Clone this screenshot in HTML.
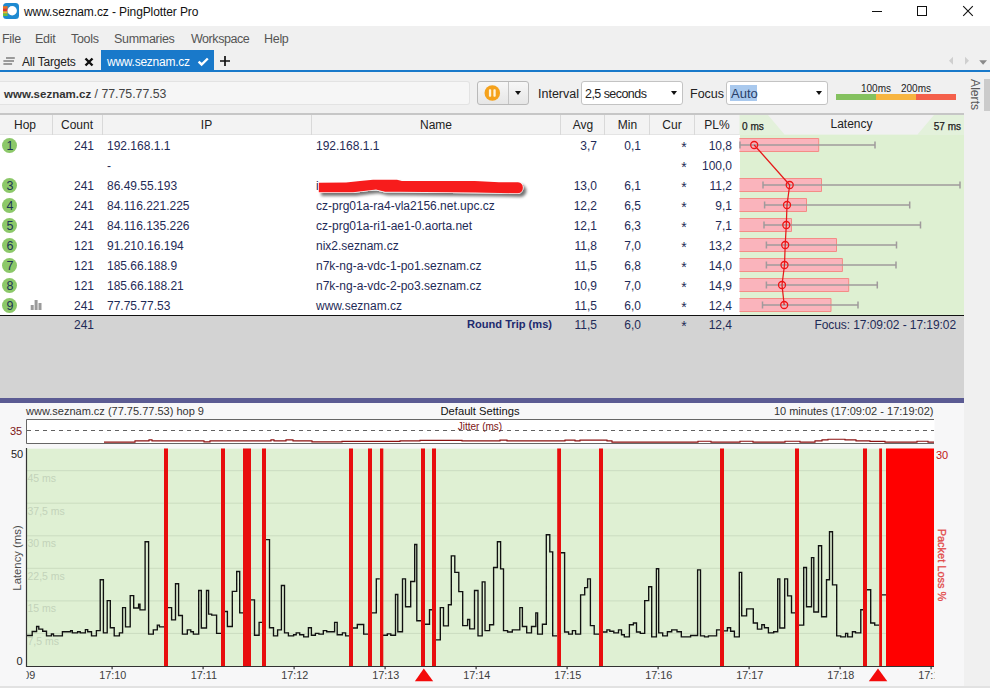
<!DOCTYPE html>
<html lang="en">
<head>
<meta charset="utf-8">
<title>www.seznam.cz - PingPlotter Pro</title>
<style>
html,body{margin:0;padding:0;}
body{width:990px;height:688px;overflow:hidden;position:relative;background:#f0f0f0;font-family:"Liberation Sans",sans-serif;font-size:12px;color:#222;}
.abs{position:absolute;}
.t{position:absolute;white-space:nowrap;line-height:1;}
#titlebar{left:0;top:0;width:990px;height:26px;background:#fff;}
#menubar{left:0;top:26px;width:990px;height:24px;background:#f0f0f0;}
#menubar .t{top:7px;font-size:12.5px;letter-spacing:-0.3px;color:#555;}
#tabs{left:0;top:50px;width:990px;height:20px;background:#f0f0f0;}
#tabline{left:0;top:70px;width:990px;height:2px;background:#1979ca;}
#seltab{left:101px;top:50px;width:113px;height:21px;background:#1979ca;}
#toolbar{left:0;top:72px;width:964px;height:42px;background:#f0f0f0;}
.combo{background:#fff;border:1px solid #c3c3c3;border-radius:3px;box-sizing:border-box;height:24px;top:81px;}
.caret{width:0;height:0;border-left:3.6px solid transparent;border-right:3.6px solid transparent;border-top:4.4px solid #111;}
#alerts{left:964px;top:72px;width:26px;height:616px;background:#f0f0f0;}
/* table */
#thead{left:0;top:113px;width:964px;height:22px;background:#f3f3f3;border-top:2px solid #c6c6c6;border-bottom:1px solid #e4e4e4;box-sizing:border-box;}
#thead .t{top:3.7px;font-size:12px;color:#222;}
.vsep{position:absolute;top:115px;width:1px;height:20px;background:#d9d9d9;}
#tbody{left:0;top:135px;width:740px;height:180px;background:#fff;}
.row{position:absolute;left:0;width:738px;height:20px;color:#1f2b57;font-size:12px;}
.row .t{top:5px;}
.r{text-align:right;}
.hop{position:absolute;left:2.4px;top:3px;width:15px;height:14.5px;border-radius:8px;background:#8cc869;color:#1d3557;font-size:12.5px;line-height:16px;text-align:center;}
#latbg{left:739.5px;top:115px;width:224.5px;height:200px;background:#def0d2;}
#sumrow{left:0;top:315px;width:964px;height:85px;background:#d3d3d3;}
#sumline{left:0;top:315px;width:964px;height:1.3px;background:#111;}
#splitter{left:0;top:398px;width:964px;height:5px;background:#5b5b93;}
#graph{left:0;top:403px;width:964px;height:285px;background:#f7f7f8;}
</style>
</head>
<body>
<!-- TITLE BAR -->
<div id="titlebar" class="abs">
  <svg class="abs" style="left:3px;top:3px" width="16" height="16" viewBox="0 0 16 16">
    <rect x="0" y="0" width="16" height="16" rx="3.5" fill="#1e8ad1"/>
    <rect x="0" y="3.2" width="4.6" height="2.6" fill="#f2701d"/>
    <rect x="0" y="5.8" width="4.6" height="2.6" fill="#e5352c"/>
    <rect x="0" y="8.4" width="4.6" height="2.2" fill="#f3b721"/>
    <rect x="0" y="10.6" width="4.6" height="2.4" fill="#6cbf3f"/>
    <circle cx="9.2" cy="7.8" r="4.7" fill="#fff"/>
  </svg>
  <div class="t" style="left:24px;top:6px;font-size:12px;letter-spacing:-0.1px;color:#111;">www.seznam.cz - PingPlotter Pro</div>
  <svg class="abs" style="left:860px;top:0" width="130" height="27" viewBox="0 0 130 27">
    <path d="M12 11.5H22" stroke="#111" stroke-width="1" fill="none"/>
    <rect x="57.5" y="6.5" width="9" height="9" stroke="#111" stroke-width="1" fill="none"/>
    <path d="M103.2 6.2L112.8 15.8M112.8 6.2L103.2 15.8" stroke="#111" stroke-width="1.1" fill="none"/>
  </svg>
</div>
<!-- MENU BAR -->
<div id="menubar" class="abs">
  <div class="t" style="left:2px">File</div>
  <div class="t" style="left:35px">Edit</div>
  <div class="t" style="left:71px">Tools</div>
  <div class="t" style="left:114px">Summaries</div>
  <div class="t" style="left:191px;letter-spacing:-0.45px">Workspace</div>
  <div class="t" style="left:264px">Help</div>
</div>
<!-- TABS -->
<div id="tabs" class="abs"></div>
<div id="seltab" class="abs"></div>
<div id="tabline" class="abs"></div>
<svg class="abs" style="left:3px;top:57px" width="13" height="10" viewBox="0 0 13 10">
  <path d="M3 1H11.8M0.4 4.1H11M0.4 7.1H9.1" stroke="#7d7d7d" stroke-width="1.5" fill="none"/>
</svg>
<div class="t" style="left:22px;top:56px;font-size:12px;letter-spacing:-0.2px;color:#222;">All Targets</div>
<svg class="abs" style="left:84px;top:57px" width="10" height="10" viewBox="0 0 10 10">
  <path d="M1.5 1.5L8.5 8.5M8.5 1.5L1.5 8.5" stroke="#111" stroke-width="2.4" fill="none"/>
</svg>
<div class="t" style="left:107px;top:56px;font-size:12px;letter-spacing:-0.25px;color:#fff;">www.seznam.cz</div>
<svg class="abs" style="left:196.5px;top:57.2px" width="13" height="11" viewBox="0 0 13 11">
  <path d="M1.6 4.7L4.6 7.5L10.8 1.5" stroke="#fff" stroke-width="2.4" fill="none"/>
</svg>
<svg class="abs" style="left:219px;top:55px" width="12" height="12" viewBox="0 0 12 12">
  <path d="M6 1V11M1 6H11" stroke="#111" stroke-width="1.7" fill="none"/>
</svg>
<svg class="abs" style="left:945px;top:55px" width="45" height="14" viewBox="0 0 45 14">
  <path d="M8 1.8L4 5.8L8 9.8Z" fill="#cfcfcf"/>
  <path d="M20 1.8L24 5.8L20 9.8Z" fill="#cfcfcf"/>
  <path d="M34.2 5.3H42L38.1 9.8Z" fill="#8a8a8a"/>
</svg>
<!-- TOOLBAR -->
<div id="toolbar" class="abs"></div>
<div class="abs" style="left:0;top:81px;width:470px;height:24px;background:#f6f6f6;border:1px solid #e3e3e3;border-left:none;box-sizing:border-box;border-radius:0 3px 3px 0;"></div>
<div class="t" style="left:4px;top:88px;font-size:12.3px;color:#444;"><b style="color:#333;font-size:11.5px">www.seznam.cz</b> / 77.75.77.53</div>
<div class="abs" style="left:477px;top:81px;width:52px;height:24px;border:1px solid #b9b9b9;border-radius:3px;box-sizing:border-box;background:linear-gradient(#f7f7f7,#e6e6e6);"></div>
<div class="abs" style="left:508px;top:82px;width:1px;height:22px;background:#c4c4c4;"></div>
<svg class="abs" style="left:483px;top:84px" width="18" height="18" viewBox="0 0 18 18">
  <circle cx="9.3" cy="9" r="7.8" fill="#f5a21c"/>
  <rect x="5.9" y="5.3" width="2.3" height="7.4" rx="0.8" fill="#fff4dc"/>
  <rect x="10.4" y="5.3" width="2.3" height="7.4" rx="0.8" fill="#fff4dc"/>
</svg>
<div class="abs caret" style="left:515px;top:91px;"></div>
<div class="t" style="left:538px;top:88px;font-size:12.5px;letter-spacing:0px;color:#222;">Interval</div>
<div class="abs combo" style="left:581px;width:102px;"></div>
<div class="t" style="left:585px;top:88px;font-size:12.5px;letter-spacing:-0.55px;color:#222;">2,5 seconds</div>
<div class="abs caret" style="left:670.5px;top:91px;"></div>
<div class="t" style="left:690px;top:88px;font-size:12.5px;letter-spacing:0px;color:#222;">Focus</div>
<div class="abs combo" style="left:726px;width:102px;"></div>
<div class="abs" style="left:730px;top:85px;width:27px;height:16px;background:#a9c9ee;"></div>
<div class="t" style="left:731px;top:87px;font-size:13px;color:#2a3f6a;">Auto</div>
<div class="abs caret" style="left:815.5px;top:91px;"></div>
<div class="abs" style="left:836px;top:94px;width:40px;height:6px;background:#84c15f;"></div>
<div class="abs" style="left:876px;top:94px;width:40px;height:6px;background:#f7b541;"></div>
<div class="abs" style="left:916px;top:94px;width:40px;height:6px;background:#f4604b;"></div>
<div class="t" style="left:861px;top:84px;font-size:10px;color:#222;">100ms</div>
<div class="t" style="left:901px;top:84px;font-size:10px;color:#222;">200ms</div>
<!-- ALERTS PANEL -->
<div id="alerts" class="abs"></div>
<div class="abs" style="left:984px;top:79px;width:6px;height:31.5px;background:#cbcbcb;"></div>
<div class="t" style="left:980.5px;top:79px;font-size:12.2px;color:#5a5a5a;transform-origin:0 0;transform:rotate(90deg);">Alerts</div>

<!--TABLE START-->
<div id="thead" class="abs">
  <div class="t" style="left:-15px;width:80px;text-align:center;">Hop</div>
  <div class="t" style="left:37px;width:80px;text-align:center;">Count</div>
  <div class="t" style="left:166.5px;width:80px;text-align:center;">IP</div>
  <div class="t" style="left:396px;width:80px;text-align:center;">Name</div>
  <div class="t" style="left:543px;width:80px;text-align:center;">Avg</div>
  <div class="t" style="left:587.5px;width:80px;text-align:center;">Min</div>
  <div class="t" style="left:632px;width:80px;text-align:center;">Cur</div>
  <div class="t" style="left:677px;width:80px;text-align:center;">PL%</div>
</div>
<div class="vsep" style="left:52px"></div>
<div class="vsep" style="left:102px"></div>
<div class="vsep" style="left:311px"></div>
<div class="vsep" style="left:560px"></div>
<div class="vsep" style="left:604px"></div>
<div class="vsep" style="left:649px"></div>
<div class="vsep" style="left:694px"></div>
<div id="tbody" class="abs">
 <div class="row" style="top:0px">
  <div class="hop">1</div>
  <div class="t r" style="left:54px;width:40px">241</div>
  <div class="t" style="left:107px">192.168.1.1</div>
  <div class="t" style="left:316px">192.168.1.1</div>
  <div class="t r" style="left:557px;width:40px">3,7</div>
  <div class="t r" style="left:601px;width:40px">0,1</div>
  <div class="t" style="left:680px;width:8px;text-align:center;top:5px;font-size:14px;">*</div>
  <div class="t r" style="left:692px;width:40px">10,8</div>
 </div>
 <div class="row" style="top:20px">
  <div class="t" style="left:107px">-</div>
  <div class="t" style="left:680px;width:8px;text-align:center;top:5px;font-size:14px;">*</div>
  <div class="t r" style="left:692px;width:40px">100,0</div>
 </div>
 <div class="row" style="top:40px">
  <div class="hop">3</div>
  <div class="t r" style="left:54px;width:40px">241</div>
  <div class="t" style="left:107px">86.49.55.193</div>
  <div class="t" style="left:316px">i</div>
  <div class="t r" style="left:557px;width:40px">13,0</div>
  <div class="t r" style="left:601px;width:40px">6,1</div>
  <div class="t" style="left:680px;width:8px;text-align:center;top:5px;font-size:14px;">*</div>
  <div class="t r" style="left:692px;width:40px">11,2</div>
 </div>
 <div class="row" style="top:60px">
  <div class="hop">4</div>
  <div class="t r" style="left:54px;width:40px">241</div>
  <div class="t" style="left:107px">84.116.221.225</div>
  <div class="t" style="left:316px">cz-prg01a-ra4-vla2156.net.upc.cz</div>
  <div class="t r" style="left:557px;width:40px">12,2</div>
  <div class="t r" style="left:601px;width:40px">6,5</div>
  <div class="t" style="left:680px;width:8px;text-align:center;top:5px;font-size:14px;">*</div>
  <div class="t r" style="left:692px;width:40px">9,1</div>
 </div>
 <div class="row" style="top:80px">
  <div class="hop">5</div>
  <div class="t r" style="left:54px;width:40px">241</div>
  <div class="t" style="left:107px">84.116.135.226</div>
  <div class="t" style="left:316px">cz-prg01a-ri1-ae1-0.aorta.net</div>
  <div class="t r" style="left:557px;width:40px">12,1</div>
  <div class="t r" style="left:601px;width:40px">6,3</div>
  <div class="t" style="left:680px;width:8px;text-align:center;top:5px;font-size:14px;">*</div>
  <div class="t r" style="left:692px;width:40px">7,1</div>
 </div>
 <div class="row" style="top:100px">
  <div class="hop">6</div>
  <div class="t r" style="left:54px;width:40px">121</div>
  <div class="t" style="left:107px">91.210.16.194</div>
  <div class="t" style="left:316px">nix2.seznam.cz</div>
  <div class="t r" style="left:557px;width:40px">11,8</div>
  <div class="t r" style="left:601px;width:40px">7,0</div>
  <div class="t" style="left:680px;width:8px;text-align:center;top:5px;font-size:14px;">*</div>
  <div class="t r" style="left:692px;width:40px">13,2</div>
 </div>
 <div class="row" style="top:120px">
  <div class="hop">7</div>
  <div class="t r" style="left:54px;width:40px">121</div>
  <div class="t" style="left:107px">185.66.188.9</div>
  <div class="t" style="left:316px">n7k-ng-a-vdc-1-po1.seznam.cz</div>
  <div class="t r" style="left:557px;width:40px">11,5</div>
  <div class="t r" style="left:601px;width:40px">6,8</div>
  <div class="t" style="left:680px;width:8px;text-align:center;top:5px;font-size:14px;">*</div>
  <div class="t r" style="left:692px;width:40px">14,0</div>
 </div>
 <div class="row" style="top:140px">
  <div class="hop">8</div>
  <div class="t r" style="left:54px;width:40px">121</div>
  <div class="t" style="left:107px">185.66.188.21</div>
  <div class="t" style="left:316px">n7k-ng-a-vdc-2-po3.seznam.cz</div>
  <div class="t r" style="left:557px;width:40px">10,9</div>
  <div class="t r" style="left:601px;width:40px">7,0</div>
  <div class="t" style="left:680px;width:8px;text-align:center;top:5px;font-size:14px;">*</div>
  <div class="t r" style="left:692px;width:40px">14,9</div>
 </div>
 <div class="row" style="top:160px">
  <div class="hop">9</div>
  <div class="t r" style="left:54px;width:40px">241</div>
  <div class="t" style="left:107px">77.75.77.53</div>
  <div class="t" style="left:316px">www.seznam.cz</div>
  <div class="t r" style="left:557px;width:40px">11,5</div>
  <div class="t r" style="left:601px;width:40px">6,0</div>
  <div class="t" style="left:680px;width:8px;text-align:center;top:5px;font-size:14px;">*</div>
  <div class="t r" style="left:692px;width:40px">12,4</div>
 </div>
</div>
<svg class="abs" style="left:305px;top:170px" width="240" height="34" viewBox="305 170 240 34">
<defs><filter id="sh" x="-5%" y="-50%" width="110%" height="220%"><feGaussianBlur in="SourceAlpha" stdDeviation="1.6"/><feOffset dx="2.5" dy="2.5"/><feComponentTransfer><feFuncA type="linear" slope="0.55"/></feComponentTransfer><feMerge><feMergeNode/><feMergeNode in="SourceGraphic"/></feMerge></filter></defs>
<path filter="url(#sh)" d="M318.8 182.8L346 182.6L360 181L373 179.7L397 179.7L402 181L475 181L499 182.2L518 182.2A5.6 5.6 0 0 1 518 193.3L475 192.6L400 191.8L385 191.8L376 189.6L368 190.4L353 192.3L318.8 192.3Z" fill="#f71d1d" stroke="#fff" stroke-width="1.2" stroke-opacity="0.9" paint-order="stroke"/>
</svg>
<svg class="abs" style="left:30px;top:299px" width="13" height="12" viewBox="0 0 13 12"><rect x="0.7" y="6" width="3" height="5" fill="#9a9a9a"/><rect x="4.6" y="1" width="3" height="10" fill="#9a9a9a"/><rect x="8.5" y="4" width="3" height="7" fill="#9a9a9a"/></svg>
<div id="latbg" class="abs"></div>
<svg class="abs" style="left:738px;top:114px" width="227" height="202" viewBox="738 114 227 202">
<rect x="739.5" y="115" width="224.5" height="20" fill="#e3f1db"/><path d="M768 115H934L917.5 134.5H784.5Z" fill="#f1f1f1"/>
<rect x="739.5" y="138.5" width="79.2" height="13" fill="#fab4bc"/><path d="M739.5 138.5H818.7V151.5H739.5" fill="none" stroke="#f48c86" stroke-width="1"/>
<path d="M740 145H875M740 141.5V148.5M875 141.5V148.5" stroke="#a09a9c" stroke-width="1.5" fill="none"/>
<rect x="739.5" y="178.5" width="82.0" height="13" fill="#fab4bc"/><path d="M739.5 178.5H821.5V191.5H739.5" fill="none" stroke="#f48c86" stroke-width="1"/>
<path d="M763 185H960M763 181.5V188.5M960 181.5V188.5" stroke="#a09a9c" stroke-width="1.5" fill="none"/>
<rect x="739.5" y="198.5" width="67.0" height="13" fill="#fab4bc"/><path d="M739.5 198.5H806.5V211.5H739.5" fill="none" stroke="#f48c86" stroke-width="1"/>
<path d="M764.6 205H909.7M764.6 201.5V208.5M909.7 201.5V208.5" stroke="#a09a9c" stroke-width="1.5" fill="none"/>
<rect x="739.5" y="218.5" width="52.0" height="13" fill="#fab4bc"/><path d="M739.5 218.5H791.5V231.5H739.5" fill="none" stroke="#f48c86" stroke-width="1"/>
<path d="M764 225H920.5M764 221.5V228.5M920.5 221.5V228.5" stroke="#a09a9c" stroke-width="1.5" fill="none"/>
<rect x="739.5" y="238.5" width="97.0" height="13" fill="#fab4bc"/><path d="M739.5 238.5H836.5V251.5H739.5" fill="none" stroke="#f48c86" stroke-width="1"/>
<path d="M766.4 245H896.5M766.4 241.5V248.5M896.5 241.5V248.5" stroke="#a09a9c" stroke-width="1.5" fill="none"/>
<rect x="739.5" y="258.5" width="102.9" height="13" fill="#fab4bc"/><path d="M739.5 258.5H842.4V271.5H739.5" fill="none" stroke="#f48c86" stroke-width="1"/>
<path d="M766.4 265H896M766.4 261.5V268.5M896 261.5V268.5" stroke="#a09a9c" stroke-width="1.5" fill="none"/>
<rect x="739.5" y="278.5" width="109.2" height="13" fill="#fab4bc"/><path d="M739.5 278.5H848.7V291.5H739.5" fill="none" stroke="#f48c86" stroke-width="1"/>
<path d="M766.4 285H877.3M766.4 281.5V288.5M877.3 281.5V288.5" stroke="#a09a9c" stroke-width="1.5" fill="none"/>
<rect x="739.5" y="298.5" width="91.5" height="13" fill="#fab4bc"/><path d="M739.5 298.5H831.0V311.5H739.5" fill="none" stroke="#f48c86" stroke-width="1"/>
<path d="M762.5 305H858M762.5 301.5V308.5M858 301.5V308.5" stroke="#a09a9c" stroke-width="1.5" fill="none"/>
<polyline points="754.2,145 789.7,185 787,205 786.3,225 785.2,245 784.5,265 782,285 784.2,305" stroke="#e51a1a" stroke-width="1.25" fill="none"/>
<circle cx="754.2" cy="145" r="3.5" stroke="#ee1414" stroke-width="1.3" fill="none"/>
<circle cx="789.7" cy="185" r="3.5" stroke="#ee1414" stroke-width="1.3" fill="none"/>
<circle cx="787" cy="205" r="3.5" stroke="#ee1414" stroke-width="1.3" fill="none"/>
<circle cx="786.3" cy="225" r="3.5" stroke="#ee1414" stroke-width="1.3" fill="none"/>
<circle cx="785.2" cy="245" r="3.5" stroke="#ee1414" stroke-width="1.3" fill="none"/>
<circle cx="784.5" cy="265" r="3.5" stroke="#ee1414" stroke-width="1.3" fill="none"/>
<circle cx="782" cy="285" r="3.5" stroke="#ee1414" stroke-width="1.3" fill="none"/>
<circle cx="784.2" cy="305" r="3.5" stroke="#ee1414" stroke-width="1.3" fill="none"/>
<text x="742" y="130" font-family="Liberation Sans, sans-serif" font-size="10.1" fill="#222" stroke="#222" stroke-width="0.25">0 ms</text>
<text x="961" y="130" text-anchor="end" font-family="Liberation Sans, sans-serif" font-size="10" fill="#222" stroke="#222" stroke-width="0.25">57 ms</text>
<text x="851.5" y="127.7" text-anchor="middle" font-family="Liberation Sans, sans-serif" font-size="12" fill="#222">Latency</text>
</svg>
<div id="sumrow" class="abs"></div>
<div id="sumline" class="abs"></div>
<div class="row" style="top:314px;width:965px;">
  <div class="t r" style="left:54px;width:40px">241</div>
  <div class="t r" style="left:352px;width:200px;font-weight:bold;font-size:11.1px;color:#1d2a6e">Round Trip (ms)</div>
  <div class="t r" style="left:557px;width:40px">11,5</div>
  <div class="t r" style="left:601px;width:40px">6,0</div>
  <div class="t" style="left:680px;width:8px;text-align:center;top:5px;font-size:14px;">*</div>
  <div class="t r" style="left:692px;width:40px">12,4</div>
  <div class="t r" style="left:756px;width:200px;letter-spacing:-0.07px">Focus: 17:09:02 - 17:19:02</div>
</div>
<div id="splitter" class="abs"></div>
<!--TABLE END-->
<!--GRAPH START-->
<div id="graph" class="abs"></div>
<svg class="abs" style="left:0;top:403px" width="965" height="285" viewBox="0 403 965 285">
<text x="26" y="415" font-family="Liberation Sans, sans-serif" font-size="11" fill="#333">www.seznam.cz (77.75.77.53) hop 9</text>
<text x="480" y="415" text-anchor="middle" font-family="Liberation Sans, sans-serif" font-size="11.2" fill="#111">Default Settings</text>
<text x="933.5" y="415" text-anchor="end" font-family="Liberation Sans, sans-serif" font-size="11" fill="#333">10 minutes (17:09:02 - 17:19:02)</text>
<rect x="26.5" y="419.5" width="908" height="24" fill="#fff" stroke="none"/>
<path d="M934 419.5H26.5V443.5H934" fill="none" stroke="#555" stroke-width="0.9"/>
<path d="M27 430.5H934" stroke="#444" stroke-width="0.85" stroke-dasharray="4 4" fill="none"/>
<text x="10" y="435" font-family="Liberation Sans, sans-serif" font-size="11" fill="#7d1414">35</text>
<text x="480" y="429.5" text-anchor="middle" font-family="Liberation Sans, sans-serif" font-size="10" fill="#7d1414">Jitter (ms)</text>
<path d="M104 442.1H135V440.8H149V439.8H152V440.8H204V441.8H210V440.8H271V439.8H274V440.8H286V439.8H293V440.8H312V441.8H342V441.4H400V440.8H420V440.4H462V440.8H500V440.1H507V440.8H565V440.1H575V440.8H580V440.1H607V440.8H612V442.1H698V441.2H711V442.1H740V441.2H753V442.1H785V441.2H800V442.1H815V440.8H822V439.8H828V439.2H845V439.8H856V440.8H870V441.4H885V442.1H917V441.2H928V442.1H934" stroke="#8c1111" stroke-width="1.15" fill="none"/>
<rect x="26.5" y="448.7" width="907.5" height="217.8" fill="#dff0d3"/>
<path d="M27 633.4H934" stroke="#cbdcc0" stroke-width="1"/>
<path d="M27 600.9H934" stroke="#cbdcc0" stroke-width="1"/>
<path d="M27 568.3H934" stroke="#cbdcc0" stroke-width="1"/>
<path d="M27 535.8H934" stroke="#cbdcc0" stroke-width="1"/>
<path d="M27 503.2H934" stroke="#cbdcc0" stroke-width="1"/>
<path d="M27 470.7H934" stroke="#cbdcc0" stroke-width="1"/>
<text x="27.5" y="644.9" font-family="Liberation Sans, sans-serif" font-size="10.5" fill="#c3d3ba">7,5 ms</text>
<text x="27.5" y="612.4" font-family="Liberation Sans, sans-serif" font-size="10.5" fill="#c3d3ba">15 ms</text>
<text x="27.5" y="579.8" font-family="Liberation Sans, sans-serif" font-size="10.5" fill="#c3d3ba">22,5 ms</text>
<text x="27.5" y="547.3" font-family="Liberation Sans, sans-serif" font-size="10.5" fill="#c3d3ba">30 ms</text>
<text x="27.5" y="514.7" font-family="Liberation Sans, sans-serif" font-size="10.5" fill="#c3d3ba">37,5 ms</text>
<text x="27.5" y="482.2" font-family="Liberation Sans, sans-serif" font-size="10.5" fill="#c3d3ba">45 ms</text>
<path d="M26.5 635.5H32.2V631.5H36.6V626.5H38.8V629.1H42.7V631.2H46.5V635.9H51.4V634.0H53.5V635.9H62.4V631.7H70.6V630.6H72.3V632.9H77.6V631.7H80.2V632.9H85.4V629.6H87.7V631.7H91.5V635.9H96.4V630.6H100.2V579.7H103.4V632.9H107.2V600.6H110.3V627.7H114.2V635.9H119.4V632.9H122.6V607.6H125.5V626.8H130.2V595.6H133.7V608.0H138.6V604.1H140.0V609.9H145.1V541.7H148.6V634.1H153.3V629.8H157.3V625.1H159.4V626.8H164.1M167.5 607.6H171.6V619.8H175.5V583.7H178.6V615.5H182.4V634.1H187.3V629.8H190.8V631.7H193.4V634.1H198.7V590.5H201.3V628.0H206.5V590.5H208.6V614.1H211.7V615.1H216.6V633.3H221.3M224.5 611.5H227.4V626.5H232.3V591.4H236.7V571.5H239.7V612.8H243.1M250.5 599.8H254.5V635.2H259.1V622.4H262.2M265.5 539.6H269.5V627.7H273.5V635.9H277.6V629.8H281.4V585.5H284.5V632.9H288.4V635.9H293.6V634.7H296.2V632.9H299.7V634.7H303.7V636.9H308.4V627.7H311.4V635.2H315.4V633.3H318.9V634.1H323.3V630.6H326.7V631.7H334.6V622.4H337.2V634.7H342.4V632.9H345.6V635.9H349.4M352.5 628.0H357.3V624.5H363.7V634.1H368.6M371.5 612.8H376.3V578.8H379.8M382.8 635.2H387.3V633.8H390.8V635.2H395.5V594.5H397.8V631.7H402.5V578.8H405.5V606.7H410.7V581.5H414.7V544.5H416.8V620.7H421.2M424.5 624.2H429.5V609.7H432.2M435.5 639.9H440.3V607.6H443.5V625.9H448.4V604.7H451.3V555.8H454.8V572.4H458.8V591.6H462.7V625.6H467.6V619.5H469.7V628.9H474.5V590.5H478.0V635.9H482.2V581.8H485.0V630.6H489.6V624.7H493.6V567.5H497.4V541.7H500.6V568.9H503.5V630.6H507.6V632.0H512.3V629.8H519.8V607.6H522.4V626.5H526.7V632.9H531.5V626.5H535.8V612.8H537.6V634.1H542.4V624.2H546.3V534.7H549.8V551.8H552.7V635.9H557.3M560.5 552.7H564.6V632.0H568.6V634.1H572.4V630.6H575.6V634.1H580.6V594.9H584.7V587.6H587.6V578.8H590.4V625.6H594.2V634.1H599.1M602.5 632.0H606.9V629.8H609.8V631.2H613.8V632.9H618.5V629.8H621.5V634.7H624.3V636.9H629.4V624.7H633.4V623.0H636.5V632.0H640.3V633.3H644.7V600.6H648.7V586.7H651.7V636.9H656.4V568.7H658.7V632.9H662.7V635.9H667.4V631.7H671.7V629.8H677.0V631.7H681.3V636.9H690.6V635.5H697.6V569.8H700.5V635.9H704.5V636.9H708.4V635.9H715.0V635.9H716.6V629.8H720.1M723.5 630.8H727.4V627.7H730.6V631.2H734.4V636.9H739.3V572.4H741.7V615.8H746.6V608.8H753.3V623.0H757.4V629.1H761.8V624.7H764.4V627.7H768.4V632.9H773.7V631.7H777.7V578.8H779.8V628.0H784.7V578.8H787.6V595.8H791.5V612.8H795.1M798.5 625.1H803.7V567.5H806.5V606.7H811.5V557.6H813.8V612.0H818.5V545.7H821.6V616.7H826.5V579.7H829.5V531.7H832.5V584.9H836.7V635.9H840.7V636.9H845.6V633.3H847.7V636.9H852.4V631.7H855.5V632.9H860.8V609.7H863.0M866.5 589.7H870.7V623.0H874.7V625.1H879.1M881.5 594.9H886.0" stroke="#111" stroke-width="1.35" fill="none" stroke-linejoin="miter"/>
<rect x="164" y="448.5" width="4.0" height="218" fill="#e80d0d"/>
<rect x="221" y="448.5" width="4.0" height="218" fill="#e80d0d"/>
<rect x="243" y="448.5" width="8.0" height="218" fill="#e80d0d"/>
<rect x="262" y="448.5" width="4.0" height="218" fill="#e80d0d"/>
<rect x="349" y="448.5" width="4.0" height="218" fill="#e80d0d"/>
<rect x="368" y="448.5" width="4.0" height="218" fill="#e80d0d"/>
<rect x="380" y="448.5" width="3.3" height="218" fill="#e80d0d"/>
<rect x="421" y="448.5" width="4.0" height="218" fill="#e80d0d"/>
<rect x="432" y="448.5" width="4.0" height="218" fill="#e80d0d"/>
<rect x="557.2" y="448.5" width="3.8" height="218" fill="#e80d0d"/>
<rect x="599" y="448.5" width="4.0" height="218" fill="#e80d0d"/>
<rect x="720" y="448.5" width="4.0" height="218" fill="#e80d0d"/>
<rect x="795" y="448.5" width="4.0" height="218" fill="#e80d0d"/>
<rect x="863" y="448.5" width="4.0" height="218" fill="#e80d0d"/>
<rect x="879.2" y="448.5" width="2.8" height="218" fill="#e80d0d"/>
<rect x="886" y="448.5" width="48.0" height="218" fill="#ff0000"/>
<path d="M26.5 448V666.5H934" fill="none" stroke="#333" stroke-width="1.2"/>
<path d="M112.1 666.5V669.3" stroke="#333" stroke-width="1.2"/>
<path d="M203.1 666.5V669.3" stroke="#333" stroke-width="1.2"/>
<path d="M294.1 666.5V669.3" stroke="#333" stroke-width="1.2"/>
<path d="M385.1 666.5V669.3" stroke="#333" stroke-width="1.2"/>
<path d="M476.1 666.5V669.3" stroke="#333" stroke-width="1.2"/>
<path d="M567.1 666.5V669.3" stroke="#333" stroke-width="1.2"/>
<path d="M658.1 666.5V669.3" stroke="#333" stroke-width="1.2"/>
<path d="M749.1 666.5V669.3" stroke="#333" stroke-width="1.2"/>
<path d="M840.1 666.5V669.3" stroke="#333" stroke-width="1.2"/>
<path d="M931.1 666.5V669.3" stroke="#333" stroke-width="1.2"/>
<text x="112.8" y="679" text-anchor="middle" font-family="Liberation Sans, sans-serif" font-size="10.8" fill="#3c3c3c">17:10</text>
<text x="203.8" y="679" text-anchor="middle" font-family="Liberation Sans, sans-serif" font-size="10.8" fill="#3c3c3c">17:11</text>
<text x="294.8" y="679" text-anchor="middle" font-family="Liberation Sans, sans-serif" font-size="10.8" fill="#3c3c3c">17:12</text>
<text x="385.8" y="679" text-anchor="middle" font-family="Liberation Sans, sans-serif" font-size="10.8" fill="#3c3c3c">17:13</text>
<text x="476.8" y="679" text-anchor="middle" font-family="Liberation Sans, sans-serif" font-size="10.8" fill="#3c3c3c">17:14</text>
<text x="567.8" y="679" text-anchor="middle" font-family="Liberation Sans, sans-serif" font-size="10.8" fill="#3c3c3c">17:15</text>
<text x="658.8" y="679" text-anchor="middle" font-family="Liberation Sans, sans-serif" font-size="10.8" fill="#3c3c3c">17:16</text>
<text x="749.8" y="679" text-anchor="middle" font-family="Liberation Sans, sans-serif" font-size="10.8" fill="#3c3c3c">17:17</text>
<text x="840.8" y="679" text-anchor="middle" font-family="Liberation Sans, sans-serif" font-size="10.8" fill="#3c3c3c">17:18</text>
<defs><clipPath id="cl"><rect x="26.5" y="668" width="908" height="20"/></clipPath></defs>
<text x="21.8" y="679" text-anchor="middle" font-family="Liberation Sans, sans-serif" font-size="10.8" fill="#3c3c3c" clip-path="url(#cl)">17:09</text>
<text x="931.8" y="679" text-anchor="middle" font-family="Liberation Sans, sans-serif" font-size="10.8" fill="#3c3c3c" clip-path="url(#cl)">17:19</text>
<path d="M423.8 668.4L433.2 681.3H414.9Z" fill="#f40a0a"/>
<path d="M878 668.4L887.3 681.3H868.8Z" fill="#f40a0a"/>
<text x="11" y="458" font-family="Liberation Sans, sans-serif" font-size="11" fill="#222">50</text>
<text x="16.5" y="664.7" font-family="Liberation Sans, sans-serif" font-size="11" fill="#222">0</text>
<text x="936" y="459" font-family="Liberation Sans, sans-serif" font-size="11" fill="#c01515">30</text>
<text transform="translate(21,558) rotate(-90)" text-anchor="middle" font-family="Liberation Sans, sans-serif" font-size="11.3" fill="#4a4a4a">Latency (ms)</text>
<text transform="translate(938,565) rotate(90)" text-anchor="middle" font-family="Liberation Sans, sans-serif" font-size="11" fill="#e24a4a" stroke="#e24a4a" stroke-width="0.3">Packet Loss %</text>
</svg>
<div class="abs" style="left:0;top:686px;width:990px;height:2px;background:#e2e2e2;"></div>
<!--GRAPH END-->
</body>
</html>
